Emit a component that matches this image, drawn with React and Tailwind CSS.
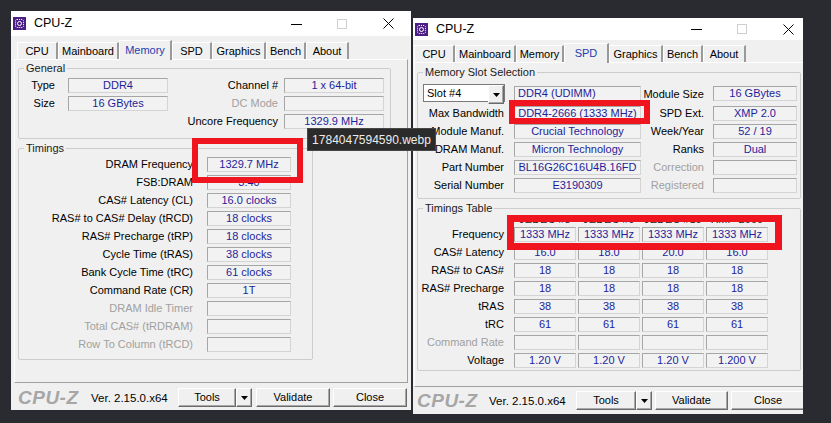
import React from "react";

const TABS = [
  ["CPU", "w-[41px]", "w-[46px]"],
  ["Mainboard", "w-[61px]", "w-[66px]"],
  ["Memory", "w-[48px]", "w-[53px]"],
  ["SPD", "w-[40px]", "w-[45px]"],
  ["Graphics", "w-[54px]", "w-[59px]"],
  ["Bench", "w-[40px]", "w-[45px]"],
  ["About", "w-[43px]", "w-[48px]"],
];

function AppIcon() {
  return (
    <svg width="13" height="13" viewBox="0 0 13 13">
      <rect width="13" height="13" fill="#4b1f86" />
      <rect x="2.5" y="2.5" width="8" height="8" rx="1.5" fill="none" stroke="#fff" strokeWidth="1" strokeDasharray="1 1" />
      <circle cx="6.5" cy="6.5" r="2" fill="none" stroke="#fff" strokeWidth="1" />
    </svg>
  );
}

function TitleBar({ className }) {
  return (
    <div className={`flex items-center bg-white shrink-0 ${className}`}>
      <div className="ml-[2px]">
        <AppIcon />
      </div>
      <span className="ml-[8px] text-[12.5px] text-black">CPU-Z</span>
      <div className="ml-auto flex h-full">
        <div className="w-[46px] flex items-center justify-center">
          <svg width="11" height="10" viewBox="0 0 11 10">
            <line x1="0" y1="5.5" x2="11" y2="5.5" stroke="#000" strokeWidth="1" />
          </svg>
        </div>
        <div className="w-[46px] flex items-center justify-center">
          <svg width="10" height="10" viewBox="0 0 10 10">
            <rect x="0.5" y="0.5" width="9" height="9" fill="none" stroke="#cfcfcf" strokeWidth="1" />
          </svg>
        </div>
        <div className="w-[46px] flex items-center justify-center">
          <svg width="11" height="11" viewBox="0 0 11 11">
            <path d="M0.5 0.5 L10.5 10.5 M10.5 0.5 L0.5 10.5" stroke="#000" strokeWidth="1" />
          </svg>
        </div>
      </div>
    </div>
  );
}

function Tabs({ active, className }) {
  return (
    <div className={`flex items-end h-[18px] shrink-0 ${className}`}>
      {TABS.map(([name, w, wa]) =>
        name === active ? (
          <div
            key={name}
            className={`${wa} h-[20px] -mb-px relative z-10 bg-[#f0f0f0] border-t border-l border-r-2 border-t-white border-l-white border-r-[#9a9a9a] flex items-center justify-center text-[#1f3fae]`}
          >
            {name}
          </div>
        ) : (
          <div
            key={name}
            className={`${w} h-[17px] border-t border-l border-r-2 border-t-white border-l-white border-r-[#9a9a9a] flex items-center justify-center text-black`}
          >
            {name}
          </div>
        )
      )}
    </div>
  );
}

function Val({ className = "", left, children }) {
  return (
    <div
      className={`h-[15px] shrink-0 flex items-center ${left ? "justify-start pl-[3px]" : "justify-center"} border border-[#d4d4d4] border-t-[#a6a6a6] border-l-[#a6a6a6] bg-[#f2f2f2] text-[#1e1e9a] leading-none whitespace-nowrap ${className}`}
    >
      {children}
    </div>
  );
}

function Group({ title, className, children }) {
  return (
    <fieldset className={`border border-[#cdcdcd] rounded-[2px] ${className}`}>
      <legend className="ml-[5px] px-[2px] leading-[13px] text-[#1a1a1a]">{title}</legend>
      {children}
    </fieldset>
  );
}

function Btn({ className, children }) {
  return (
    <div
      className={`h-[19px] flex items-center justify-center bg-[#f0f0f0] border border-t-white border-l-white border-r-[#6a6a6a] border-b-[#6a6a6a] shadow-[inset_-1px_-1px_0_#a8a8a8] text-black ${className}`}
    >
      {children}
    </div>
  );
}

function Arrow() {
  return (
    <svg width="7" height="4" viewBox="0 0 7 4">
      <path d="M0 0 H7 L3.5 4 Z" fill="#000" />
    </svg>
  );
}

function BottomBar({ className, widths }) {
  return (
    <div className={`flex items-center h-[27px] shrink-0 ${className}`}>
      <span className={`${widths[0]} text-[19px] font-bold italic text-[#a6a6a6] leading-none tracking-[0.5px]`}>CPU-Z</span>
      <span className={`${widths[1]} text-[11.5px] text-black pt-[3px]`}>Ver. 2.15.0.x64</span>
      <div className={`${widths[2]} flex`}>
        <Btn className="flex-1">Tools</Btn>
        <Btn className="w-[16px]">
          <Arrow />
        </Btn>
      </div>
      <Btn className={widths[3]}>Validate</Btn>
      <Btn className={widths[4]}>Close</Btn>
    </div>
  );
}

const TIMINGS = [
  ["DRAM Frequency", "1329.7 MHz"],
  ["FSB:DRAM", "3:40"],
  ["CAS# Latency (CL)", "16.0 clocks"],
  ["RAS# to CAS# Delay (tRCD)", "18 clocks"],
  ["RAS# Precharge (tRP)", "18 clocks"],
  ["Cycle Time (tRAS)", "38 clocks"],
  ["Bank Cycle Time (tRC)", "61 clocks"],
  ["Command Rate (CR)", "1T"],
  ["DRAM Idle Timer", "", true],
  ["Total CAS# (tRDRAM)", "", true],
  ["Row To Column (tRCD)", "", true],
];

function MemoryWindow() {
  return (
    <div className="relative ml-[11px] mt-[11px] w-[400px] h-[399px] bg-[#f0f0f0] flex flex-col shrink-0">
      <TitleBar className="h-[25px]" />
      <Tabs active="Memory" className="mt-[5px] pl-[6px]" />
      <div className="mx-[3px] h-[324px] border border-t-white border-l-white border-r-[#a0a0a0] border-b-[#a0a0a0]">
        <Group title="General" className="mt-[2px] ml-[3px] w-[373px] h-[77px]">
          <div className="pt-[3px] flex flex-col gap-[3px]">
            <div className="flex items-center h-[15px]">
              <span className="w-[36px] text-right">Type</span>
              <Val className="ml-[13px] w-[100px]">DDR4</Val>
              <span className="w-[110px] text-right">Channel #</span>
              <Val className="ml-[6px] w-[100px]">1 x 64-bit</Val>
            </div>
            <div className="flex items-center h-[15px]">
              <span className="w-[36px] text-right">Size</span>
              <Val className="ml-[13px] w-[100px]">16 GBytes</Val>
              <span className="w-[110px] text-right text-[#a0a0a0]">DC Mode</span>
              <Val className="ml-[6px] w-[100px]" />
            </div>
            <div className="flex items-center h-[15px]">
              <span className="w-[149px]" />
              <span className="w-[110px] text-right">Uncore Frequency</span>
              <Val className="ml-[6px] w-[100px]">1329.9 MHz</Val>
            </div>
          </div>
        </Group>
        <Group title="Timings" className="mt-[3px] ml-[3px] w-[295px] h-[218px]">
          <div className="pt-[2px] flex flex-col gap-[3px]">
            {TIMINGS.map(([label, value, dim]) => (
              <div key={label} className="flex items-center h-[15px]">
                <span className={`w-[174px] text-right whitespace-nowrap ${dim ? "text-[#a0a0a0]" : "text-black"}`}>{label}</span>
                <Val className="ml-[14px] w-[84px]">{value}</Val>
              </div>
            ))}
          </div>
        </Group>
      </div>
      <BottomBar
        className="pl-[7px] pt-[2px]"
        widths={["w-[73px]", "w-[87px]", "w-[74px]", "ml-[4px] w-[74px]", "ml-[3px] w-[74px]"]}
      />
      <div className="absolute left-[181px] top-[127px] w-[111px] h-[45px] border-[6px] border-[#f0141e] z-20" />
    </div>
  );
}

const SLOT_ROWS = [
  ["Max Bandwidth", "DDR4-2666 (1333 MHz)", "SPD Ext.", "XMP 2.0"],
  ["Module Manuf.", "Crucial Technology", "Week/Year", "52 / 19"],
  ["DRAM Manuf.", "Micron Technology", "Ranks", "Dual"],
  ["Part Number", "BL16G26C16U4B.16FD", "Correction", "", true],
  ["Serial Number", "E3190309", "Registered", "", true],
];

const TABLE_ROWS = [
  ["Frequency", ["1333 MHz", "1333 MHz", "1333 MHz", "1333 MHz"]],
  ["CAS# Latency", ["16.0", "18.0", "20.0", "16.0"]],
  ["RAS# to CAS#", ["18", "18", "18", "18"]],
  ["RAS# Precharge", ["18", "18", "18", "18"]],
  ["tRAS", ["38", "38", "38", "38"]],
  ["tRC", ["61", "61", "61", "61"]],
  ["Command Rate", ["", "", "", ""], true],
  ["Voltage", ["1.20 V", "1.20 V", "1.20 V", "1.200 V"]],
];

function SpdWindow() {
  return (
    <div className="relative ml-[2px] mt-[18px] w-[390px] h-[396px] overflow-hidden shrink-0">
      <div className="w-[398px] h-full bg-[#f0f0f0] flex flex-col">
        <TitleBar className="h-[22px]" />
        <Tabs active="SPD" className="mt-[4px] pl-[1px]" />
        <div className="ml-[1px] h-[325px] border border-t-white border-l-white border-r-[#a0a0a0] border-b-[#a0a0a0]">
          <Group title="Memory Slot Selection" className="mt-[3px] ml-[2px] w-[384px] h-[133px]">
            <div className="pt-[5px]">
              <div className="flex items-center h-[18px]">
                <div className="ml-[5px] w-[82px] h-[18px] flex bg-white border border-[#7a7a7a]">
                  <span className="flex-1 pl-[3px] leading-[16px] text-black">Slot #4</span>
                  <Btn className="w-[16px] h-[16px]">
                    <Arrow />
                  </Btn>
                </div>
                <Val left className="ml-[9px] w-[127px]">DDR4 (UDIMM)</Val>
                <span className="w-[63px] text-right pt-[3px]">Module Size</span>
                <Val className="ml-[9px] w-[84px]">16 GBytes</Val>
              </div>
              <div className="mt-[4px] flex flex-col gap-[3px]">
                {SLOT_ROWS.map(([l1, v1, l2, v2, dim]) => (
                  <div key={l1} className="flex items-center h-[15px]">
                    <span className="w-[86px] text-right whitespace-nowrap">{l1}</span>
                    <Val className="ml-[10px] w-[127px]">{v1}</Val>
                    <span className={`w-[63px] text-right whitespace-nowrap ${dim ? "text-[#a0a0a0]" : "text-black"}`}>{l2}</span>
                    <Val className="ml-[9px] w-[84px]">{v2}</Val>
                  </div>
                ))}
              </div>
            </div>
          </Group>
          <Group title="Timings Table" className="mt-[3px] ml-[2px] w-[384px] h-[169px]">
            <div className="-mt-[2px] h-[12px] flex items-center">
              <span className="w-[96px]" />
              <div className="flex gap-[2px] text-[#222] leading-none">
                <span className="w-[62px] text-center">JEDEC #8</span>
                <span className="w-[62px] text-center">JEDEC #9</span>
                <span className="w-[62px] text-center">JEDEC #10</span>
                <span className="w-[62px] text-center">XMP-2666</span>
              </div>
            </div>
            <div className="mt-[2px] flex flex-col gap-[3px]">
              {TABLE_ROWS.map(([label, vals, dim]) => (
                <div key={label} className="flex items-center h-[15px]">
                  <span className={`w-[86px] text-right whitespace-nowrap ${dim ? "text-[#a0a0a0]" : "text-black"}`}>{label}</span>
                  <div className="ml-[10px] flex gap-[2px]">
                    {vals.map((v, i) => (
                      <Val key={i} className="w-[62px]">{v}</Val>
                    ))}
                  </div>
                </div>
              ))}
            </div>
          </Group>
        </div>
        <BottomBar
          className="pl-[4px]"
          widths={["w-[72px]", "w-[87px]", "w-[76px]", "ml-[3px] w-[73px]", "ml-[3px] w-[74px]"]}
        />
      </div>
      <div className="absolute left-[96px] top-[82px] w-[141px] h-[24px] border-[6px] border-[#f0141e] z-20" />
      <div className="absolute left-[94px] top-[197px] w-[275px] h-[35px] border-[7px] border-[#f0141e] z-20" />
    </div>
  );
}

export default function App() {
  return (
    <div className="relative w-[831px] h-[423px] bg-[#2a2b30] flex items-start overflow-hidden font-['Liberation_Sans',Arial,sans-serif] text-[11px] text-black">
      <MemoryWindow />
      <SpdWindow />
      <div className="absolute left-[307px] top-[128px] w-[129px] h-[23px] z-30 bg-[#2b2b2b] border border-[#474747] flex items-center justify-center text-[12px] text-[#ececec]">
        1784047594590.webp
      </div>
    </div>
  );
}
